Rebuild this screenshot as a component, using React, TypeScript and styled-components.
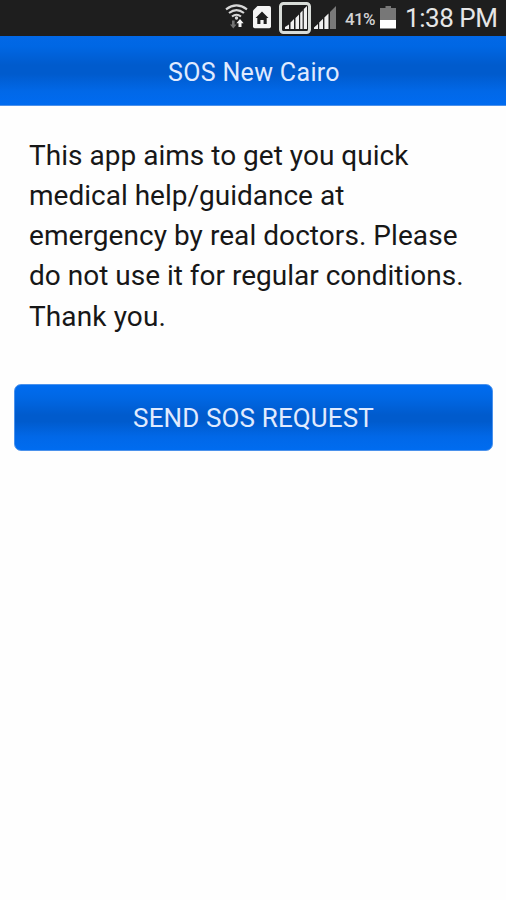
import React from "react";
import styled, { createGlobalStyle } from "styled-components";

const GlobalStyle = createGlobalStyle`
  * { box-sizing: border-box; }
  html, body { margin: 0; background: #fefefe; }
  body { font-family: Roboto, "Liberation Sans", sans-serif; color: #171717; }
`;

const Screen = styled.div`
  display: flex;
  flex-direction: column;
  width: 506px;
  height: 900px;
  overflow: hidden;
  background: #fefefe;
`;

const StatusBar = styled.header`
  display: flex;
  justify-content: flex-end;
  flex: 0 0 36px;
  height: 36px;
  padding-right: 8px;
  background: #1e1e1e;
`;

const StatusIcons = styled.svg`
  display: block;
  flex: none;
`;

const BatteryLevel = styled.span`
  width: 36px;
  padding-left: 1px;
  font-size: 17px;
  font-weight: 500;
  line-height: 38px;
  letter-spacing: -0.6px;
  white-space: nowrap;
  color: #d4d4d4;
`;

const Clock = styled.time`
  width: 94px;
  padding-left: 1px;
  font-size: 26px;
  line-height: 36px;
  letter-spacing: -0.45px;
  white-space: nowrap;
  color: #e6e6e6;
`;

const TitleBar = styled.div`
  display: flex;
  align-items: center;
  justify-content: center;
  flex: 0 0 70px;
  border-bottom: 1px solid #4d91ea;
  background: linear-gradient(#0268e6 0%, #0067e4 15%, #005bcd 42%, #005bcd 55%, #0168e8 80%, #006bf0 100%);
`;

const Title = styled.h1`
  margin: 0;
  padding: 5px 0 0 2px;
  font-size: 25px;
  font-weight: 400;
  line-height: 30px;
  letter-spacing: 0.33px;
  color: #e0ebff;
`;

const Content = styled.main`
  display: flex;
  flex-direction: column;
  padding: 29.7px 13px 0 14px;
`;

const Message = styled.p`
  margin: 0 0 47.3px;
  padding-left: 15px;
  font-size: 28px;
  line-height: 40.25px;
`;

const Line = styled.span<{ $tracking: number }>`
  display: block;
  white-space: nowrap;
  letter-spacing: ${({ $tracking }) => $tracking}px;
`;

const RequestButton = styled.button`
  height: 67px;
  padding: 1px 0 0;
  border: 1px solid #4b92ec;
  border-radius: 7px;
  background: linear-gradient(#006cf0 0%, #0067e4 20%, #005bcd 46%, #005bcd 56%, #0168e8 80%, #006cf0 100%);
  font-family: inherit;
  font-size: 26px;
  letter-spacing: 0.13px;
  color: #e0ebff;
`;

const lines = [
  { text: "This app aims to get you quick", tracking: 0.02 },
  { text: "medical help/guidance at", tracking: 0 },
  { text: "emergency by real doctors. Please", tracking: 0.06 },
  { text: "do not use it for regular conditions.", tracking: 0 },
  { text: "Thank you.", tracking: 0.12 },
];

const ConnectionIcons = () => (
  <StatusIcons width="120" height="36" viewBox="224 0 120 36" fill="none">
    <g stroke="#d8d8d8" strokeWidth="2.1">
      <path d="M226 9.3Q236.500 1.500 247 9.300" />
      <path d="M229 13Q236.500 7.200 244 13" />
      <path d="M232 16.500Q236.500 13 241 16.500" />
    </g>
    <circle cx="236.500" cy="18" r="1.700" fill="#d8d8d8" />
    <path d="M233.300 28.500L230 24.500H232V20.500H234.600V24.500H236.600Z" fill="#747474" />
    <path d="M240 19L243.600 23.200H241.500V27H238.500V23.200H236.400Z" fill="#f5f5f5" />
    <path d="M257.500 6H269.300Q271 6 271 7.700V26.500Q271 28.200 269.300 28.200H254.700Q253 28.200 253 26.500V10.500Z" fill="#f4f4f4" />
    <path d="M262 11.500L268.500 18H266.700V24H263.600V20H260.400V24H257.300V18H255.500Z" fill="#1e1e1e" />
    <rect x="280.500" y="3.500" width="29" height="29" rx="3" stroke="#d9ddd9" strokeWidth="3" />
    <path d="M285 29V27L289 24.500V29ZM290.500 29V22.500L294 19V29ZM295.500 29V18L299 14.500V29ZM300.200 29V13L302.600 10.500V29ZM303.800 29V9L307 6V29Z" fill="#f0f0f0" />
    <path d="M314 29V27.500L318 24V29ZM319.200 29V22.500L323 18.800V29ZM324.400 29V17.500L328.500 13.500V29Z" fill="#f0f0f0" />
    <path d="M330 29V12L336 6V29Z" fill="#797979" />
  </StatusIcons>
);

const BatteryIcon = () => (
  <StatusIcons width="24" height="36" viewBox="380 0 24 36">
    <path d="M385.500 6H391V8H396V20H380V8H385.500Z" fill="#777" />
    <rect x="380" y="20" width="16" height="8.500" fill="#fff" />
  </StatusIcons>
);

export default function App() {
  return (
    <Screen>
      <GlobalStyle />
      <StatusBar>
        <ConnectionIcons />
        <BatteryLevel>41%</BatteryLevel>
        <BatteryIcon />
        <Clock>1:38 PM</Clock>
      </StatusBar>
      <TitleBar>
        <Title>SOS New Cairo</Title>
      </TitleBar>
      <Content>
        <Message>
          {lines.map(({ text, tracking }) => (
            <Line key={text} $tracking={tracking}>{text}</Line>
          ))}
        </Message>
        <RequestButton type="button">SEND SOS REQUEST</RequestButton>
      </Content>
    </Screen>
  );
}
